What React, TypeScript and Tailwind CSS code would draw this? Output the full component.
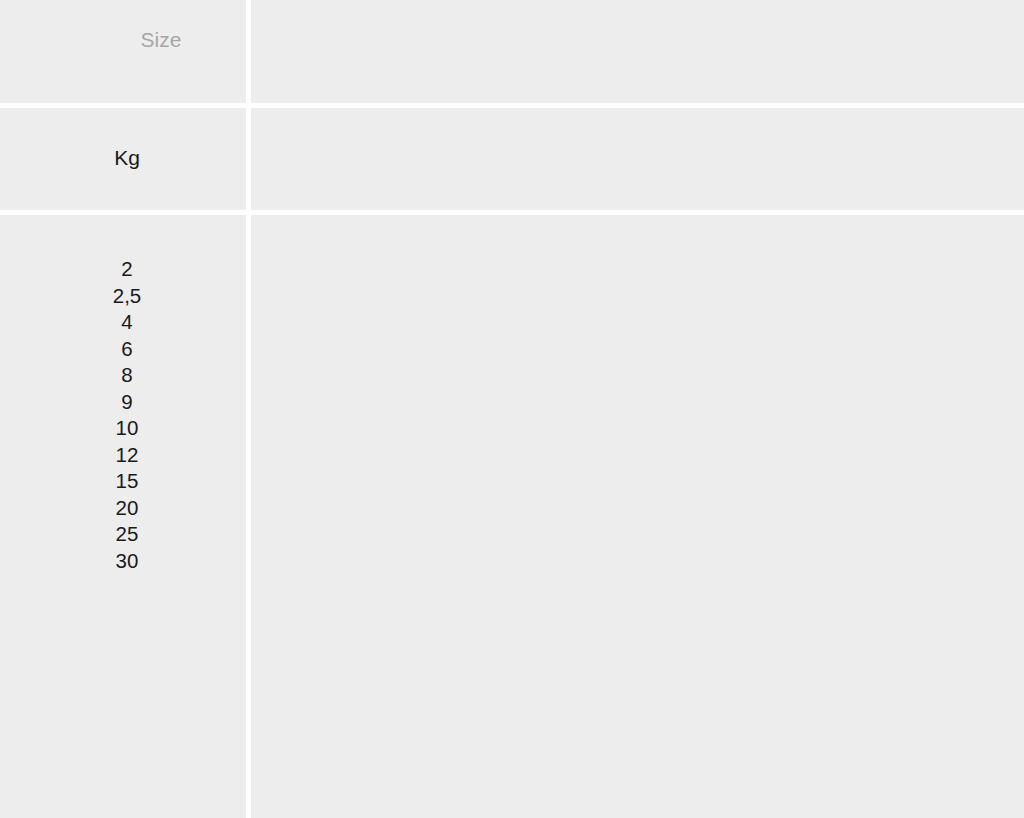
const sizes = ['2', '2,5', '4', '6', '8', '9', '10', '12', '15', '20', '25', '30'];

export default function App() {
  return (
    <div
      className="grid h-[818px] w-[1024px] grid-cols-[246px_1fr] grid-rows-[103px_102px_1fr] gap-[5px] bg-white"
      style={{ fontFamily: '"Liberation Sans", Arial, sans-serif' }}
    >
      {/* Header */}
      <div className="flex justify-center bg-[#ededed] pl-[76px] pt-[27px]">
        <span className="text-[21px] leading-[26px] text-[#a6a6a6]">Size</span>
      </div>
      <div className="bg-[#ededed]" />

      {/* Unit */}
      <div className="flex items-center justify-center bg-[#ededed] pb-[2px] pl-[8px]">
        <span className="text-[21px] leading-[26px] text-[#1a1a1a]">Kg</span>
      </div>
      <div className="bg-[#ededed]" />

      {/* Values */}
      <div className="flex flex-col items-center bg-[#ededed] pl-[8px] pt-[41px]">
        {sizes.map((s) => (
          <span key={s} className="text-[20.5px] leading-[26.5px] text-[#1a1a1a]">
            {s}
          </span>
        ))}
      </div>
      <div className="bg-[#ededed]" />
    </div>
  );
}
